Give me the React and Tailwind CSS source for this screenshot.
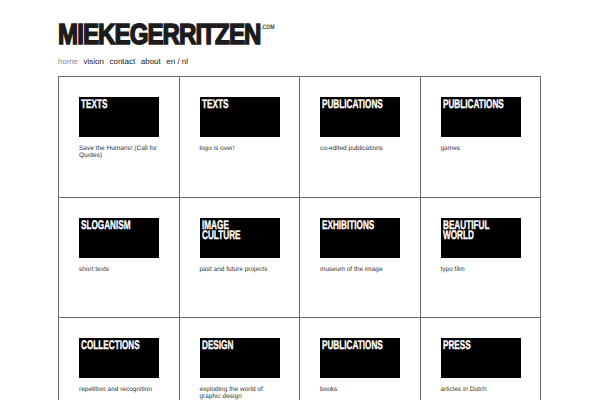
const items = [
  [["TEXTS"], "Save the Humans! (Call for Quotes)"],
  [["TEXTS"], "logo is over!"],
  [["PUBLICATIONS"], "co-edited publications"],
  [["PUBLICATIONS"], "games"],
  [["SLOGANISM"], "short texts"],
  [["IMAGE", "CULTURE"], "past and future projects"],
  [["EXHIBITIONS"], "museum of the image"],
  [["BEAUTIFUL", "WORLD"], "typo film"],
  [["COLLECTIONS"], "repetition and recognition"],
  [["DESIGN"], "exploding the world of graphic design"],
  [["PUBLICATIONS"], "books"],
  [["PRESS"], "articles in Dutch"],
];

function Cell({ title, text }) {
  return (
    <div className="h-[120.5px] border-r border-b border-[#6a6a6a] pt-[20px] pl-[20px] pr-[20px]">
      <div className="h-[40px] w-[80px] overflow-hidden bg-black pl-[2px] pt-[2px] text-[12.5px] leading-[10px] font-bold text-white">
        {title.map((t) => (
          <div key={t} className="origin-left scale-x-[0.655] whitespace-nowrap [-webkit-text-stroke:0.35px_white]">{t}</div>
        ))}
      </div>
      <p className="mt-[8px] text-[6.5px] leading-[7px] text-[#333]">{text}</p>
    </div>
  );
}

export default function App() {
  return (
    <div className="h-[400px] w-[600px] overflow-hidden bg-white pl-[58px] pt-[17px] font-['Liberation_Sans',sans-serif] [text-rendering:geometricPrecision]">
      <div className="flex h-[33px] items-start">
        <div className="w-[202.5px] origin-left scale-x-[0.83] whitespace-nowrap text-[29px] leading-[37px] font-bold tracking-[-1.1px] text-[#1c1c1c] [-webkit-text-stroke:1.5px_#1c1c1c]">MIEKEGERRITZEN</div>
        <div className="mt-[7px] origin-left scale-x-[0.8] text-[6.5px] leading-[7px] font-bold text-[#444]">.COM</div>
      </div>
      <nav className="mt-[6px] flex h-[12px] gap-[5.5px] text-[8px] leading-[12px] text-[#222]">
        <span className="text-[#888]">home</span>
        <span>vision</span>
        <span>contact</span>
        <span>about</span>
        <span>en / nl</span>
      </nav>
      <div className="mt-[8px] grid w-[483px] grid-cols-4 border-t border-l border-[#6a6a6a]">
        {items.map(([title, text], i) => (
          <Cell key={i} title={title} text={text} />
        ))}
      </div>
    </div>
  );
}
